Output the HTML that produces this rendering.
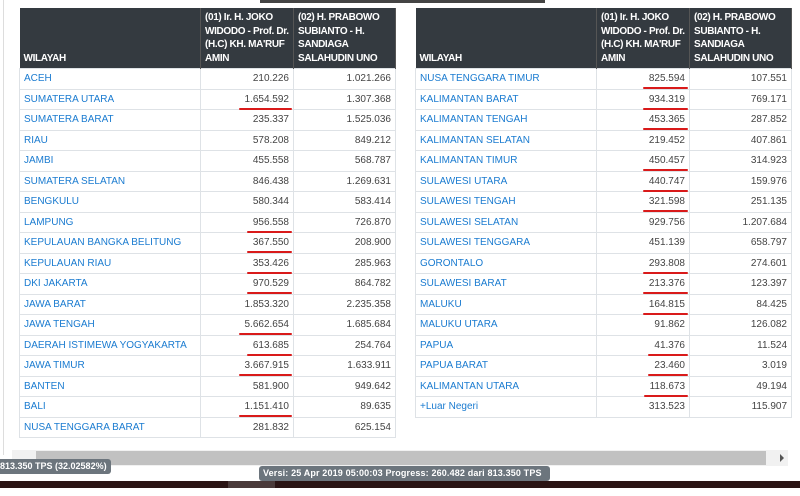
<!DOCTYPE html><html><head><meta charset="utf-8"><style>
body{margin:0;width:800px;height:488px;overflow:hidden;background:#fff;font-family:"Liberation Sans",sans-serif;font-size:10px;position:relative}
table{position:absolute;top:8px;border-collapse:collapse;table-layout:fixed}
th{background:#343a40;color:#fff;font-weight:bold;text-align:left;vertical-align:bottom;padding:3px 3px 3px 4px;line-height:13.5px;border-right:1px solid #555;font-size:10px;letter-spacing:-0.35px;height:54px}
td{border:1px solid #dee2e6;height:19.5px;padding:0 4px;color:#444;text-align:right;line-height:19px}
td:first-child{text-align:left;color:#1a7bd0}
u{text-decoration:none;position:relative;display:inline-block}
u:after{content:"";position:absolute;left:-6px;right:-3px;bottom:-1px;height:2px;background:#d91a1a;border-radius:1px}
.tip{position:absolute;background:#6c757d;color:#fff;font-size:9px;font-weight:bold;border-radius:3px;height:15px;line-height:15px;padding:0 4px}
</style></head><body>
<div style="position:absolute;left:260px;top:0;width:285px;height:3px;background:#444"></div>
<div style="position:absolute;left:3px;top:0;width:1px;height:455px;background:#ddd"></div>
<table style="left:19px;width:376px"><colgroup><col style="width:181px"><col style="width:93px"><col style="width:102px"></colgroup>
<tr><th>WILAYAH</th><th>(01) Ir. H. JOKO WIDODO - Prof. Dr. (H.C) KH. MA'RUF AMIN</th><th>(02) H. PRABOWO SUBIANTO - H. SANDIAGA SALAHUDIN UNO</th></tr>
<tr><td>ACEH</td><td>210.226</td><td>1.021.266</td></tr>
<tr><td>SUMATERA UTARA</td><td><u>1.654.592</u></td><td>1.307.368</td></tr>
<tr><td>SUMATERA BARAT</td><td>235.337</td><td>1.525.036</td></tr>
<tr><td>RIAU</td><td>578.208</td><td>849.212</td></tr>
<tr><td>JAMBI</td><td>455.558</td><td>568.787</td></tr>
<tr><td>SUMATERA SELATAN</td><td>846.438</td><td>1.269.631</td></tr>
<tr><td>BENGKULU</td><td>580.344</td><td>583.414</td></tr>
<tr><td>LAMPUNG</td><td><u>956.558</u></td><td>726.870</td></tr>
<tr><td>KEPULAUAN BANGKA BELITUNG</td><td><u>367.550</u></td><td>208.900</td></tr>
<tr><td>KEPULAUAN RIAU</td><td><u>353.426</u></td><td>285.963</td></tr>
<tr><td>DKI JAKARTA</td><td><u>970.529</u></td><td>864.782</td></tr>
<tr><td>JAWA BARAT</td><td>1.853.320</td><td>2.235.358</td></tr>
<tr><td>JAWA TENGAH</td><td><u>5.662.654</u></td><td>1.685.684</td></tr>
<tr><td>DAERAH ISTIMEWA YOGYAKARTA</td><td><u>613.685</u></td><td>254.764</td></tr>
<tr><td>JAWA TIMUR</td><td><u>3.667.915</u></td><td>1.633.911</td></tr>
<tr><td>BANTEN</td><td>581.900</td><td>949.642</td></tr>
<tr><td>BALI</td><td><u>1.151.410</u></td><td>89.635</td></tr>
<tr><td>NUSA TENGGARA BARAT</td><td>281.832</td><td>625.154</td></tr>
</table>
<table style="left:415px;width:376px"><colgroup><col style="width:181px"><col style="width:93px"><col style="width:102px"></colgroup>
<tr><th>WILAYAH</th><th>(01) Ir. H. JOKO WIDODO - Prof. Dr. (H.C) KH. MA'RUF AMIN</th><th>(02) H. PRABOWO SUBIANTO - H. SANDIAGA SALAHUDIN UNO</th></tr>
<tr><td>NUSA TENGGARA TIMUR</td><td><u>825.594</u></td><td>107.551</td></tr>
<tr><td>KALIMANTAN BARAT</td><td><u>934.319</u></td><td>769.171</td></tr>
<tr><td>KALIMANTAN TENGAH</td><td><u>453.365</u></td><td>287.852</td></tr>
<tr><td>KALIMANTAN SELATAN</td><td>219.452</td><td>407.861</td></tr>
<tr><td>KALIMANTAN TIMUR</td><td><u>450.457</u></td><td>314.923</td></tr>
<tr><td>SULAWESI UTARA</td><td><u>440.747</u></td><td>159.976</td></tr>
<tr><td>SULAWESI TENGAH</td><td><u>321.598</u></td><td>251.135</td></tr>
<tr><td>SULAWESI SELATAN</td><td>929.756</td><td>1.207.684</td></tr>
<tr><td>SULAWESI TENGGARA</td><td>451.139</td><td>658.797</td></tr>
<tr><td>GORONTALO</td><td><u>293.808</u></td><td>274.601</td></tr>
<tr><td>SULAWESI BARAT</td><td><u>213.376</u></td><td>123.397</td></tr>
<tr><td>MALUKU</td><td><u>164.815</u></td><td>84.425</td></tr>
<tr><td>MALUKU UTARA</td><td>91.862</td><td>126.082</td></tr>
<tr><td>PAPUA</td><td><u>41.376</u></td><td>11.524</td></tr>
<tr><td>PAPUA BARAT</td><td><u>23.460</u></td><td>3.019</td></tr>
<tr><td>KALIMANTAN UTARA</td><td><u>118.673</u></td><td>49.194</td></tr>
<tr><td>+Luar Negeri</td><td>313.523</td><td>115.907</td></tr>
</table>
<div style="position:absolute;left:12px;top:450px;width:776px;height:16px;background:#f1f1f1"></div>
<div style="position:absolute;left:36px;top:451px;width:730px;height:14px;background:#c1c1c1"></div>
<div style="position:absolute;left:780px;top:454px;width:0;height:0;border-left:4px solid #555;border-top:4px solid transparent;border-bottom:4px solid transparent"></div>
<div class="tip" style="left:0;top:459px;padding-left:0;border-radius:0 3px 3px 0">813.350 TPS (32.02582%)</div>
<div class="tip" style="left:259px;top:466px;width:283px;letter-spacing:0.15px">Versi: 25 Apr 2019 05:00:03 Progress: 260.482 dari 813.350 TPS (32.02582%)</div>
<div style="position:absolute;left:0;top:481px;width:800px;height:7px;background:#2a1414"></div>
<div style="position:absolute;left:228px;top:481px;width:47px;height:7px;background:#4a3a3a"></div>
</body></html>
